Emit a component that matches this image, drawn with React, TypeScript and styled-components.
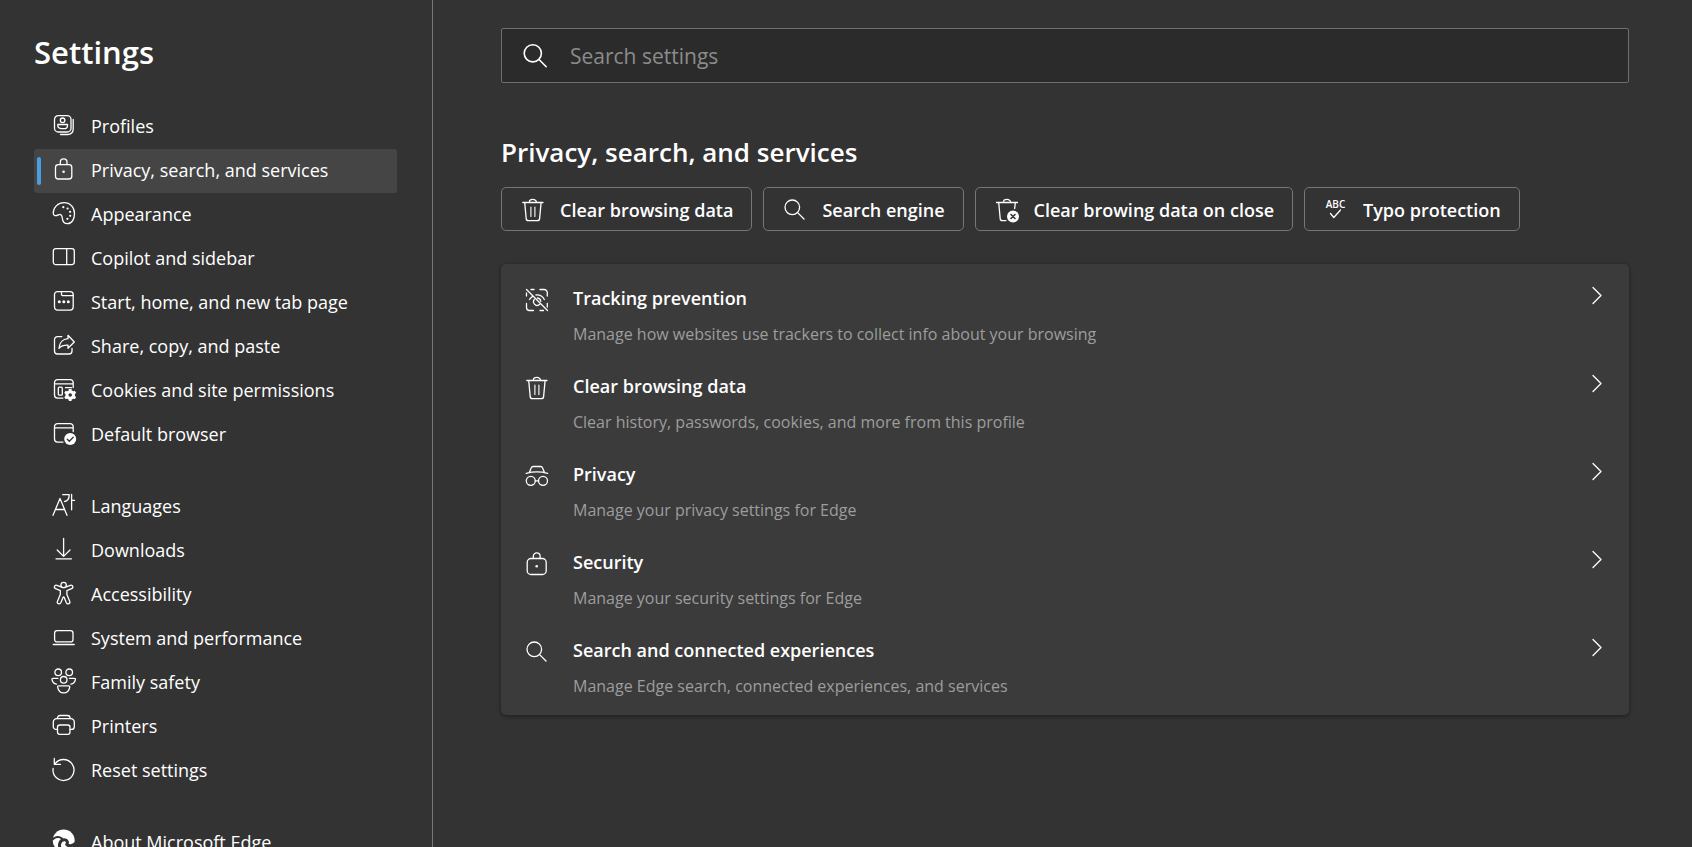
import React from 'react';
import styled, { createGlobalStyle } from 'styled-components';

const GlobalStyle = createGlobalStyle`
  *, *::before, *::after { box-sizing: border-box; }
  html, body { margin: 0; padding: 0; background: #333333; }
  body {
    font-family: 'Open Sans', 'Noto Sans', sans-serif;
    color: #ffffff;
    overflow: hidden;
  }
`;

const Page = styled.div`
  display: flex;
  height: 100vh;
  background: #333333;
`;

const Sidebar = styled.aside`
  flex: 0 0 433px;
  height: 100%;
  overflow: hidden;
  padding: 32px 35px 0 34px;
  border-right: 1px solid #767676;
`;

const SidebarTitle = styled.h1`
  margin: 0 0 33px;
  font-size: 31px;
  line-height: 40px;
  font-weight: 600;
`;

const NavGroup = styled.ul`
  list-style: none;
  margin: 0 0 28px;
  padding: 0;
`;

const NavLink = styled.a<{ $active?: boolean }>`
  position: relative;
  display: flex;
  align-items: center;
  gap: 15px;
  height: 44px;
  padding: 0 18px 2px;
  border-radius: 3px;
  background: ${(p) => (p.$active ? '#454545' : 'transparent')};
  color: #ffffff;
  font-size: 18px;
  line-height: 24px;
  text-decoration: none;
  white-space: nowrap;

  &::before {
    content: '';
    display: ${(p) => (p.$active ? 'block' : 'none')};
    position: absolute;
    left: 3px;
    top: 8px;
    bottom: 8px;
    width: 4px;
    border-radius: 2px;
    background: #4a9fe3;
  }
`;

const Icon = styled.svg`
  flex: none;
  width: 24px;
  height: 24px;
  overflow: visible;
  fill: none;
  stroke: #ffffff;
  stroke-width: 1.3;
  stroke-linecap: round;
  stroke-linejoin: round;

  .solid { fill: #ffffff; stroke: none; }
  .cut { stroke: #333333; }
  .thin { stroke-width: 1.1; }
`;

const LargeIcon = styled(Icon)`
  stroke-width: 1.6;
`;

const IconLabel = styled.text`
  fill: #ffffff;
  stroke: none;
  font-family: 'Open Sans', sans-serif;
  font-size: 10px;
  font-weight: 600;
`;

const Main = styled.main`
  flex: 1;
  min-width: 0;
  padding: 28px 63px 0 68px;
`;

const SearchBox = styled.label`
  display: flex;
  align-items: center;
  gap: 23px;
  height: 55px;
  padding: 0 21px;
  border: 1px solid #6f6f6f;
  border-radius: 2px;
  background: #2b2b2b;
`;

const SearchInput = styled.input`
  flex: 1;
  min-width: 0;
  padding: 0;
  border: 0;
  outline: 0;
  background: transparent;
  color: #ffffff;
  font-family: inherit;
  font-size: 21px;
  line-height: 28px;

  &::placeholder { color: #8c8c8c; opacity: 1; }
`;

const Heading = styled.h2`
  margin: 50px 0 16px;
  font-size: 26px;
  line-height: 38px;
  font-weight: 600;
`;

const Actions = styled.div`
  display: flex;
  flex-wrap: wrap;
  gap: 11px;
  margin-bottom: 33px;
`;

const ActionButton = styled.button`
  display: flex;
  align-items: center;
  gap: 15px;
  height: 44px;
  padding: 2px 18px 0 19px;
  border: 1px solid #767676;
  border-radius: 5px;
  background: transparent;
  color: #ffffff;
  font-family: inherit;
  font-size: 18px;
  line-height: 24px;
  font-weight: 600;
  white-space: nowrap;
`;

const Card = styled.section`
  padding: 5px 0 6px;
  border-radius: 5px;
  background: #3b3b3b;
  box-shadow: 0 2px 4px rgba(0, 0, 0, 0.25), 0 0 3px rgba(0, 0, 0, 0.2);
`;

const CardRow = styled.button`
  display: flex;
  align-items: flex-start;
  gap: 24px;
  width: 100%;
  height: 88px;
  padding: 15px 20px 0 24px;
  border: 0;
  background: transparent;
  color: #ffffff;
  font-family: inherit;
  text-align: left;

  & > svg:first-child { margin-top: 4px; }
`;

const CardText = styled.span`
  flex: 1;
  display: flex;
  flex-direction: column;
  gap: 11px;
`;

const CardTitle = styled.span`
  font-size: 18px;
  line-height: 28px;
  font-weight: 600;
`;

const CardDescription = styled.span`
  color: #9d9d9d;
  font-size: 16px;
  line-height: 22px;
`;

const SearchIcon = () => (
  <Icon viewBox="0 0 24 24" aria-hidden="true">
    <circle cx="9.3" cy="9.3" r="7.3" />
    <path d="M14.6 14.6 21 21" />
  </Icon>
);

const LargeSearchIcon = () => (
  <LargeIcon viewBox="0 0 24 24" aria-hidden="true">
    <circle cx="9.8" cy="9.3" r="8.6" />
    <path d="M16 15.5 23.2 22.7" />
  </LargeIcon>
);

const TrashIcon = () => (
  <Icon viewBox="0 0 24 24" aria-hidden="true">
    <path d="M1.8 4.5H22M8.4 4.5V4a3.5 2.6 0 0 1 7 0v.5M3.7 4.5 5.2 20.6a2.2 2.2 0 0 0 2.2 2H16.4a2.2 2.2 0 0 0 2.2-2L20.1 4.5" />
    <path className="thin" d="M9.9 9v9.5M13.9 9v9.5" />
  </Icon>
);

const TrashCloseIcon = () => (
  <Icon viewBox="0 0 24 24" aria-hidden="true">
    <path d="M1.5 4.5H22.5M8.5 4.5V4a3.5 2.6 0 0 1 7 0v.5M3.7 4.5 5.2 20.6a2.2 2.2 0 0 0 2.2 2H11M20.3 4.5l-.6 6" />
    <circle className="solid" cx="18" cy="18.5" r="6" />
    <path className="cut" strokeWidth="1.6" d="m16 16.5 4 4M20 16.5l-4 4" />
  </Icon>
);

const TypoIcon = () => (
  <Icon viewBox="0 0 24 24" aria-hidden="true">
    <IconLabel x="11.5" y="10" textAnchor="middle">ABC</IconLabel>
    <path d="m6.500 15.500 3.300 4L16.500 12" />
  </Icon>
);

const LockIcon = () => (
  <Icon viewBox="0 0 24 24" aria-hidden="true">
    <rect x="3.500" y="6.700" width="16.300" height="14.300" rx="2.800" />
    <path d="M8.300 6.500V4.300a3.350 3.350 0 0 1 6.700 0v2.200" />
    <circle className="solid" cx="11.600" cy="13.800" r="1.300" />
  </Icon>
);

const LockRoundIcon = () => (
  <Icon viewBox="0 0 24 24" aria-hidden="true">
    <rect x="2.200" y="6.500" width="19" height="16" rx="3.800" />
    <path d="M8.300 6.500V4.300a3.400 3.400 0 0 1 6.800 0v2.200" />
    <circle className="solid" cx="11.700" cy="14.300" r="1.300" />
  </Icon>
);

const ProfilesIcon = () => (
  <Icon viewBox="0 0 24 24" aria-hidden="true">
    <rect x="2.500" y="1.700" width="16.500" height="16.300" rx="3.800" />
    <circle cx="10.600" cy="6.300" r="2.300" />
    <path d="M5.800 10.500h9.700v1.200a3.700 3 0 0 1-3.700 3H9.500a3.700 3 0 0 1-3.700-3Z" />
    <path d="M21.200 5.500v9.700a5.300 5.300 0 0 1-5.300 5.300H8.500" />
  </Icon>
);

const PaletteIcon = () => (
  <Icon viewBox="0 0 24 24" aria-hidden="true">
    <path d="M1.200 11C1.500 5 6 .7 12 .7c6.500 0 10.500 4.800 10.500 10.800 0 5.500-2.500 10.200-7 10.200-3.500 0-5-2.700-5.200-5.700C10.200 13 8.500 11.800 6.500 12.800 4 14 1.200 14.200 1.200 11Z" />
    <g className="solid">
      <circle cx="11.300" cy="5.200" r="1.100" />
      <circle cx="15.600" cy="6.500" r="1.100" />
      <circle cx="18.100" cy="9.800" r="1.100" />
      <circle cx="18.200" cy="13.800" r="1.100" />
      <circle cx="15.400" cy="16.800" r="1.100" />
    </g>
  </Icon>
);

const SidebarIcon = () => (
  <Icon viewBox="0 0 24 24" aria-hidden="true">
    <rect x="1.300" y="2.600" width="21" height="16" rx="2.500" />
    <path d="M14.700 2.600v16" />
  </Icon>
);

const NewTabIcon = () => (
  <Icon viewBox="0 0 24 24" aria-hidden="true">
    <rect x="2.500" y="1.600" width="18.700" height="18.500" rx="3" />
    <path d="M9.500 1.600v3a1 1 0 0 0 1 1h10.700" />
    <g className="solid">
      <circle cx="7.300" cy="11.800" r="1.500" />
      <circle cx="11.800" cy="11.800" r="1.500" />
      <circle cx="16.300" cy="11.800" r="1.500" />
    </g>
  </Icon>
);

const ShareIcon = () => (
  <Icon viewBox="0 0 24 24" aria-hidden="true">
    <path d="M9.800 2.600H5.500a3 3 0 0 0-3 3V17a3 3 0 0 0 3 3H17a3 3 0 0 0 3-3v-2.500" />
    <path d="M16 1.300 22.300 8 16 14.300V11.200C11.500 11 9 12 7 14.300 7.300 9 10.500 5 16 4.700Z" />
  </Icon>
);

const CookiesIcon = () => (
  <Icon viewBox="0 0 24 24" aria-hidden="true">
    <path d="M21.200 9.500V4.600a3 3 0 0 0-3-3H5.500a3 3 0 0 0-3 3V17.100a3 3 0 0 0 3 3H11M2.500 5.900h18.700" />
    <rect x="6.300" y="9.200" width="4" height="8" rx="1" />
    <path d="M13.500 9.700h6" />
    <circle cx="18.200" cy="17" r="3.300" strokeWidth="3" />
    <path
      strokeWidth="2.800"
      strokeLinecap="butt"
      d="M18.200 13.500v-2.600M18.200 23.100v-2.600M15.200 15.300l-2.300-1.400M23.500 20.100l-2.300-1.400M21.200 15.300l2.300-1.400M12.900 20.100l2.300-1.400"
    />
  </Icon>
);

const DefaultBrowserIcon = () => (
  <Icon viewBox="0 0 24 24" aria-hidden="true">
    <path d="M21.200 9.500V4.600a3 3 0 0 0-3-3H5.500a3 3 0 0 0-3 3V17.100a3 3 0 0 0 3 3H11M2.500 5.900h18.700" />
    <circle className="solid" cx="18.200" cy="17" r="6" />
    <path className="cut" d="m15.300 17.300 2 2 3.900-4" />
  </Icon>
);

const LanguagesIcon = () => (
  <Icon viewBox="0 0 24 24" aria-hidden="true">
    <path d="M1 21.300 8 4.500l7 16.800M3.500 15.500h9" />
    <path d="M10.700.7h6.500c0 4-1.500 6.400-4.700 6.800M19.600.3v15.500M19.600 6.300h3" />
  </Icon>
);

const DownloadIcon = () => (
  <Icon viewBox="0 0 24 24" aria-hidden="true">
    <path d="M11.600.3v18M5.200 12l6.400 6.400L18 12M4 20.800h15.500" />
  </Icon>
);

const AccessibilityIcon = () => (
  <Icon viewBox="0 0 24 24" aria-hidden="true">
    <circle cx="11.600" cy="3" r="2.700" />
    <path d="M9 4.900 4.900 3.300a1.800 1.800 0 0 0-1.300 3.400l4.700 1.900v4L5.500 19.300a1.800 1.800 0 0 0 3.300 1.500l2.300-5.600a.6.600 0 0 1 1 0l2.300 5.600a1.800 1.800 0 0 0 3.300-1.500L14.900 12.600v-4l4.700-1.900a1.800 1.800 0 0 0-1.300-3.400L14.200 4.900" />
  </Icon>
);

const LaptopIcon = () => (
  <Icon viewBox="0 0 24 24" aria-hidden="true">
    <rect x="2.600" y="4.700" width="18.400" height="11.200" rx="2.500" />
    <path d="M1.200 18.500h21" />
  </Icon>
);

const FamilyIcon = () => (
  <Icon viewBox="0 0 24 24" aria-hidden="true">
    <circle cx="6.200" cy="2.300" r="3.300" />
    <circle cx="17.200" cy="2.300" r="3.300" />
    <circle cx="11.700" cy="9.800" r="3.300" />
    <path d="M6.800 15.800h9.800c.8 0 1.300.6 1.100 1.500-.6 3.400-2.900 5.500-6 5.500s-5.400-2.100-6-5.500c-.2-.9.3-1.500 1.100-1.500Z" />
    <path d="M6 8.300H1C.2 8.300-.2 8.800 0 9.600c.5 2.400 2 4.100 4.500 4.500M17.400 8.300h5c.8 0 1.200.5 1 1.300-.5 2.400-2 4.100-4.500 4.500" />
  </Icon>
);

const PrinterIcon = () => (
  <Icon viewBox="0 0 24 24" aria-hidden="true">
    <path d="M5.500 4.600V4a2.500 2.500 0 0 1 2.500-2.500h7.500A2.500 2.500 0 0 1 18 4v.6" />
    <path d="M5.500 15.400H4a2.700 2.700 0 0 1-2.700-2.700V8A3.400 3.400 0 0 1 4.700 4.600h14.200A3.400 3.400 0 0 1 22.300 8v4.700a2.700 2.700 0 0 1-2.700 2.700H18" />
    <rect x="5.500" y="11" width="12.500" height="9.300" rx="2.200" />
  </Icon>
);

const ResetIcon = () => (
  <Icon viewBox="0 0 24 24" aria-hidden="true">
    <path d="M2.300.5v5.800h6.200M2.800 6.100A10.500 10.500 0 1 1 1.100 10.500" />
  </Icon>
);

const EdgeIcon = () => (
  <Icon viewBox="0 0 24 24" aria-hidden="true">
    <circle className="solid" cx="11.700" cy="10.500" r="11" />
    <path className="cut" strokeWidth="2" d="M.5 9.500C3 6.500 7 6 10 8.500" />
    <path className="cut" strokeWidth="3" d="M9.500 21C5.500 15 8 9.800 12.500 9.800c3 0 3.500 2.700 2.200 4.700 2 2 6 1.500 8.500-.8" />
  </Icon>
);

const TrackingIcon = () => (
  <Icon viewBox="0 0 24 24" aria-hidden="true">
    <path d="M6 1.500h3M1.500 8V5M15 1.500h4a3.300 3.300 0 0 1 3.300 3.300V8M1.500 15.500v4a3 3 0 0 0 3 3h4M22.300 15.500v3.500M15 22.500h3.500" />
    <path d="M1.500 1.500l21 21" />
    <path d="M4.500 11.500c.8-1.400 1.800-2.500 3.200-3.200M11 7c4-.3 6.800 1.600 8.300 4.500M9.300 11.500a3.700 3.700 0 0 0 5.600 4.800M12.500 10a3.700 3.700 0 0 1 3.300 3.300" />
  </Icon>
);

const IncognitoIcon = () => (
  <Icon viewBox="0 0 24 24" aria-hidden="true">
    <path d="M4.500 8 6.300 3.800a2 2 0 0 1 1.900-1.300h7.400a2 2 0 0 1 1.900 1.300L19.300 8M1.200 9.300c6.500-1.600 15-1.600 21.400 0" />
    <circle cx="5.800" cy="16.800" r="4.500" />
    <circle cx="18" cy="16.800" r="4.500" />
    <path d="M10.300 16.800h3.200" />
  </Icon>
);

const ChevronIcon = () => (
  <Icon viewBox="0 0 24 24" aria-hidden="true">
    <path d="m8 3.500 8 8-8 8" />
  </Icon>
);

type Entry = { label: string; icon: React.ComponentType; active?: boolean };

const navGroups: Entry[][] = [
  [
    { label: 'Profiles', icon: ProfilesIcon },
    { label: 'Privacy, search, and services', icon: LockIcon, active: true },
    { label: 'Appearance', icon: PaletteIcon },
    { label: 'Copilot and sidebar', icon: SidebarIcon },
    { label: 'Start, home, and new tab page', icon: NewTabIcon },
    { label: 'Share, copy, and paste', icon: ShareIcon },
    { label: 'Cookies and site permissions', icon: CookiesIcon },
    { label: 'Default browser', icon: DefaultBrowserIcon },
  ],
  [
    { label: 'Languages', icon: LanguagesIcon },
    { label: 'Downloads', icon: DownloadIcon },
    { label: 'Accessibility', icon: AccessibilityIcon },
    { label: 'System and performance', icon: LaptopIcon },
    { label: 'Family safety', icon: FamilyIcon },
    { label: 'Printers', icon: PrinterIcon },
    { label: 'Reset settings', icon: ResetIcon },
  ],
  [{ label: 'About Microsoft Edge', icon: EdgeIcon }],
];

const actions: Entry[] = [
  { label: 'Clear browsing data', icon: TrashIcon },
  { label: 'Search engine', icon: SearchIcon },
  { label: 'Clear browing data on close', icon: TrashCloseIcon },
  { label: 'Typo protection', icon: TypoIcon },
];

const sections = [
  {
    title: 'Tracking prevention',
    description: 'Manage how websites use trackers to collect info about your browsing',
    icon: TrackingIcon,
  },
  {
    title: 'Clear browsing data',
    description: 'Clear history, passwords, cookies, and more from this profile',
    icon: TrashIcon,
  },
  { title: 'Privacy', description: 'Manage your privacy settings for Edge', icon: IncognitoIcon },
  { title: 'Security', description: 'Manage your security settings for Edge', icon: LockRoundIcon },
  {
    title: 'Search and connected experiences',
    description: 'Manage Edge search, connected experiences, and services',
    icon: SearchIcon,
  },
];

export default function App() {
  return (
    <Page>
      <GlobalStyle />
      <Sidebar>
        <SidebarTitle>Settings</SidebarTitle>
        <nav aria-label="Settings">
          {navGroups.map((group) => (
            <NavGroup key={group[0].label}>
              {group.map(({ label, icon: Glyph, active }) => (
                <li key={label}>
                  <NavLink href="#" $active={active} aria-current={active ? 'page' : undefined}>
                    <Glyph />
                    {label}
                  </NavLink>
                </li>
              ))}
            </NavGroup>
          ))}
        </nav>
      </Sidebar>
      <Main>
        <SearchBox>
          <LargeSearchIcon />
          <SearchInput type="search" placeholder="Search settings" aria-label="Search settings" />
        </SearchBox>
        <Heading>Privacy, search, and services</Heading>
        <Actions>
          {actions.map(({ label, icon: Glyph }) => (
            <ActionButton type="button" key={label}>
              <Glyph />
              {label}
            </ActionButton>
          ))}
        </Actions>
        <Card>
          {sections.map(({ title, description, icon: Glyph }) => (
            <CardRow type="button" key={title}>
              <Glyph />
              <CardText>
                <CardTitle>{title}</CardTitle>
                <CardDescription>{description}</CardDescription>
              </CardText>
              <ChevronIcon />
            </CardRow>
          ))}
        </Card>
      </Main>
    </Page>
  );
}
